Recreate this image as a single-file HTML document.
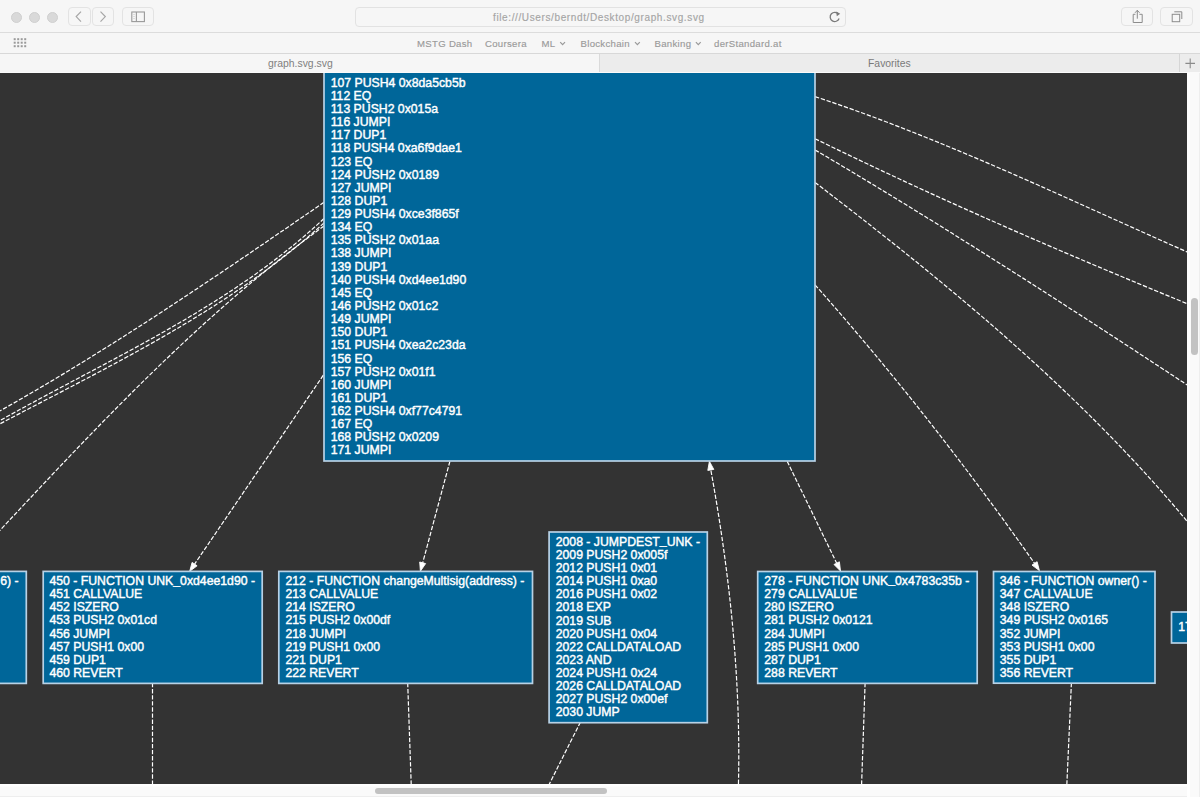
<!DOCTYPE html>
<html><head><meta charset="utf-8"><style>
*{margin:0;padding:0;box-sizing:border-box}
html,body{width:1200px;height:797px;overflow:hidden;background:#f6f6f6;font-family:"Liberation Sans",sans-serif}
.abs{position:absolute}
#toolbar{left:0;top:0;width:1200px;height:33px;background:#f6f6f6;border-bottom:1px solid #dcdcdc}
#bm{left:0;top:33px;width:1200px;height:21px;background:#f6f6f6;border-bottom:1px solid #d8d8d8}
#tabs{left:0;top:54px;width:1200px;height:19px;background:#ececec}
#content{left:0;top:73px;width:1187px;height:711px}
.circ{width:11px;height:11px;border-radius:50%;background:#d9d9d9;border:0.5px solid #cfcfcf}
.btn{border:1px solid #e3e3e3;border-radius:4px;background:#f6f6f6}
.bmt{font-size:9.6px;letter-spacing:0.3px;-webkit-text-stroke:0.15px #9a9a9a;color:#9a9a9a;top:37.7px;white-space:nowrap}
.chev{top:39px}
svg text{font-family:"Liberation Sans",sans-serif;font-size:12.25px;fill:#ffffff;stroke:#ffffff;stroke-width:0.42px}
.e{fill:none;stroke:#ffffff;stroke-width:1.2;stroke-dasharray:4.35,1.74}
.a{fill:#ffffff;stroke:#ffffff;stroke-width:0.9}
.n{fill:#006699;stroke:#b8d2e6;stroke-width:1.7}
</style></head><body>
<div id="toolbar" class="abs">
  <div class="abs circ" style="left:11.4px;top:11.7px"></div>
  <div class="abs circ" style="left:28.9px;top:11.7px"></div>
  <div class="abs circ" style="left:46.5px;top:11.7px"></div>
  <div class="abs btn" style="left:68px;top:7px;width:23px;height:19px"></div>
  <div class="abs btn" style="left:92px;top:7px;width:22px;height:19px"></div>
  <svg class="abs" style="left:68px;top:7px" width="46" height="19"><path d="M13,4.6 L8.2,9.6 L13,14.6" fill="none" stroke="#a6a6a6" stroke-width="1.2"/><path d="M32.5,4.6 L37.3,9.6 L32.5,14.6" fill="none" stroke="#a6a6a6" stroke-width="1.2"/></svg>
  <div class="abs btn" style="left:122px;top:7px;width:32px;height:19px"></div>
  <svg class="abs" style="left:122px;top:7px" width="32" height="19"><rect x="9.8" y="5" width="12.6" height="9.6" fill="none" stroke="#999" stroke-width="1.1"/><line x1="14.4" y1="5" x2="14.4" y2="14.6" stroke="#999" stroke-width="1.1"/><path d="M12,7 v1 M12,9 v1 M12,11 v1" stroke="#bbb" stroke-width="0.8"/></svg>
  <div class="abs" style="left:354.5px;top:7px;width:491px;height:19.5px;border:1px solid #e2e2e2;border-radius:4px;background:#f6f6f6"></div>
  <div class="abs" style="left:493px;top:11.1px;font-size:10px;letter-spacing:0.62px;-webkit-text-stroke:0.15px #a5a5a5;color:#a5a5a5;white-space:nowrap;line-height:14px">file:///Users/berndt/Desktop/graph.svg.svg</div>
  <svg class="abs" style="left:826px;top:9px" width="17" height="16"><path d="M12.5,5.2 A4.6,4.6 0 1 0 13.1,9.5" fill="none" stroke="#7a7a7a" stroke-width="1.3"/><path d="M10.2,2.5 L14.2,4.8 L10.8,7.3 Z" fill="#7a7a7a"/></svg>
  <div class="abs btn" style="left:1121px;top:7px;width:32px;height:19px"></div>
  <svg class="abs" style="left:1121px;top:7px" width="32" height="19"><path d="M14.4,7.3 L12.2,7.3 L12.2,15.5 L21.2,15.5 L21.2,7.3 L18.4,7.3" fill="none" stroke="#8c8c8c" stroke-width="1"/><path d="M16.3,3.2 L16.3,11.7" stroke="#8c8c8c" stroke-width="1"/><path d="M14,5.8 L16.3,3.3 L18.6,5.8" fill="none" stroke="#8c8c8c" stroke-width="1"/></svg>
  <div class="abs btn" style="left:1160px;top:7px;width:33px;height:19px"></div>
  <svg class="abs" style="left:1160px;top:7px" width="33" height="19"><rect x="12.2" y="7.3" width="7.5" height="7.4" fill="none" stroke="#8c8c8c" stroke-width="1"/><path d="M14.3,4.8 L21.8,4.8 L21.8,12" fill="none" stroke="#8c8c8c" stroke-width="1"/></svg>
</div>
<div id="bm" class="abs">
  <svg class="abs" style="left:12px;top:4px" width="16" height="12">
  <rect x="1.7" y="1.2" width="2" height="2" fill="#9a9a9a"/><rect x="1.7" y="4.7" width="2" height="2" fill="#9a9a9a"/><rect x="1.7" y="8.2" width="2" height="2" fill="#9a9a9a"/><rect x="5.2" y="1.2" width="2" height="2" fill="#9a9a9a"/><rect x="5.2" y="4.7" width="2" height="2" fill="#9a9a9a"/><rect x="5.2" y="8.2" width="2" height="2" fill="#9a9a9a"/><rect x="8.7" y="1.2" width="2" height="2" fill="#9a9a9a"/><rect x="8.7" y="4.7" width="2" height="2" fill="#9a9a9a"/><rect x="8.7" y="8.2" width="2" height="2" fill="#9a9a9a"/><rect x="12.2" y="1.2" width="2" height="2" fill="#9a9a9a"/><rect x="12.2" y="4.7" width="2" height="2" fill="#9a9a9a"/><rect x="12.2" y="8.2" width="2" height="2" fill="#9a9a9a"/>
  </svg>
</div>
<div class="abs bmt" style="left:417px">MSTG Dash</div>
<div class="abs bmt" style="left:485px">Coursera</div>
<div class="abs bmt" style="left:541.5px">ML</div>
<div class="abs bmt" style="left:580.5px">Blockchain</div>
<div class="abs bmt" style="left:654.5px">Banking</div>
<div class="abs bmt" style="left:714px">derStandard.at</div>
<svg class="abs" style="left:0;top:37px" width="1200" height="12">
 <path d="M560.2,5.2 L562.6,7.7 L565,5.2" fill="none" stroke="#9a9a9a" stroke-width="1.2"/>
 <path d="M635,5.2 L637.4,7.7 L639.8,5.2" fill="none" stroke="#9a9a9a" stroke-width="1.2"/>
 <path d="M695.9,5.2 L698.3,7.7 L700.7,5.2" fill="none" stroke="#9a9a9a" stroke-width="1.2"/>
</svg>
<div id="tabs" class="abs">
  <div class="abs" style="left:0;top:0;width:600px;height:19px;background:#f6f6f6;border-right:1px solid #dadada"></div>
  <div class="abs" style="left:268px;top:3.1px;font-size:10.4px;color:#808080;line-height:14px">graph.svg.svg</div>
  <div class="abs" style="left:868px;top:3.1px;font-size:10.4px;color:#7a7a7a;line-height:14px">Favorites</div>
  <div class="abs" style="left:1179px;top:0;width:1px;height:19px;background:#d6d6d6"></div>
  <div class="abs" style="left:0;top:18px;width:1200px;height:1px;background:#fafafa"></div>
  <svg class="abs" style="left:1180px;top:0" width="20" height="19"><path d="M10.2,4.6 V14.2 M5.4,9.4 H15" stroke="#8a8a8a" stroke-width="1.1"/></svg>
</div>
<div id="content" class="abs"><svg width="1187" height="711" viewBox="0 73 1187 711">
<rect x="0" y="73" width="1187" height="711" fill="#333333"/>
<g><path class="e" d="M324.0,202.3 C211.9,279.5 99.5,356.4 -20.0,422.0"/><path class="e" d="M324.0,218.5 C224.0,312.2 96.6,364.2 -20.0,432.0"/><path class="e" d="M324.0,222.9 C223.2,314.8 98.6,370.8 -20.0,434.5"/><path class="e" d="M324.0,226.0 C199.6,315.6 94.4,429.3 -10.0,541.0"/><path class="e" d="M815.0,96.6 C951.0,141.4 1079.1,204.9 1210.0,262.0"/><path class="e" d="M815.0,138.7 C944.3,202.1 1076.7,258.7 1210.0,313.0"/><path class="e" d="M815.0,149.9 C949.3,229.1 1079.9,314.2 1210.0,400.0"/><path class="e" d="M815.0,182.4 C953.6,288.5 1090.0,400.5 1200.0,537.0"/><path class="e" d="M152.5,683.0 L152.5,790.0"/><path class="e" d="M407.7,683.0 L411.4,790.0"/><path class="e" d="M580.5,722.0 C558.7,765.3 558.7,765.3 546.4,790.0"/><path class="e" d="M865.1,683.0 L861.4,790.0"/><path class="e" d="M1071.4,683.0 L1066.6,790.0"/><path class="e" d="M323.3,375.2 L194.6,564.1"/><path class="a" d="M189.7,571.3 L192.1,562.4 L197.1,565.8 Z"/><path class="e" d="M449.9,461.3 L422.7,562.8"/><path class="a" d="M420.4,571.2 L419.7,562.0 L425.6,563.6 Z"/><path class="e" d="M787.2,461.3 L836.7,563.2"/><path class="a" d="M840.5,571.0 L834.0,564.5 L839.4,561.8 Z"/><path class="e" d="M815.0,284.8 C893.5,373.2 966.6,466.7 1034.6,563.4"/><path class="a" d="M1039.4,570.6 L1032.0,565.1 L1037.1,561.7 Z"/><path class="e" d="M738.3,790.0 C741.3,682.7 730.1,575.4 710.8,469.9"/><path class="a" d="M709.4,461.3 L713.8,469.4 L707.8,470.4 Z"/></g>
<g><rect class="n" x="324" y="40" width="491.0" height="421.0"/><text x="330.7" y="86.80">107 PUSH4 0x8da5cb5b</text><text x="330.7" y="99.93">112 EQ</text><text x="330.7" y="113.06">113 PUSH2 0x015a</text><text x="330.7" y="126.19">116 JUMPI</text><text x="330.7" y="139.32">117 DUP1</text><text x="330.7" y="152.45">118 PUSH4 0xa6f9dae1</text><text x="330.7" y="165.58">123 EQ</text><text x="330.7" y="178.71">124 PUSH2 0x0189</text><text x="330.7" y="191.84">127 JUMPI</text><text x="330.7" y="204.97">128 DUP1</text><text x="330.7" y="218.10">129 PUSH4 0xce3f865f</text><text x="330.7" y="231.23">134 EQ</text><text x="330.7" y="244.36">135 PUSH2 0x01aa</text><text x="330.7" y="257.49">138 JUMPI</text><text x="330.7" y="270.62">139 DUP1</text><text x="330.7" y="283.75">140 PUSH4 0xd4ee1d90</text><text x="330.7" y="296.88">145 EQ</text><text x="330.7" y="310.01">146 PUSH2 0x01c2</text><text x="330.7" y="323.14">149 JUMPI</text><text x="330.7" y="336.27">150 DUP1</text><text x="330.7" y="349.40">151 PUSH4 0xea2c23da</text><text x="330.7" y="362.53">156 EQ</text><text x="330.7" y="375.66">157 PUSH2 0x01f1</text><text x="330.7" y="388.79">160 JUMPI</text><text x="330.7" y="401.92">161 DUP1</text><text x="330.7" y="415.05">162 PUSH4 0xf77c4791</text><text x="330.7" y="428.18">167 EQ</text><text x="330.7" y="441.31">168 PUSH2 0x0209</text><text x="330.7" y="454.44">171 JUMPI</text><rect class="n" x="-200" y="571.4" width="226.3" height="112.0"/><text x="0.3" y="585.1">6) -</text><rect class="n" x="43.2" y="571.4" width="219.0" height="112.0"/><text x="49.4" y="585.10">450 - FUNCTION UNK<tspan dy="-1.6">_</tspan><tspan dy="1.6">0xd4ee1d90 -</tspan></text><text x="49.4" y="598.23">451 CALLVALUE</text><text x="49.4" y="611.36">452 ISZERO</text><text x="49.4" y="624.49">453 PUSH2 0x01cd</text><text x="49.4" y="637.62">456 JUMPI</text><text x="49.4" y="650.75">457 PUSH1 0x00</text><text x="49.4" y="663.88">459 DUP1</text><text x="49.4" y="677.01">460 REVERT</text><rect class="n" x="278.8" y="571.4" width="253.7" height="112.0"/><text x="285.4" y="585.10">212 - FUNCTION changeMultisig(address) -</text><text x="285.4" y="598.23">213 CALLVALUE</text><text x="285.4" y="611.36">214 ISZERO</text><text x="285.4" y="624.49">215 PUSH2 0x00df</text><text x="285.4" y="637.62">218 JUMPI</text><text x="285.4" y="650.75">219 PUSH1 0x00</text><text x="285.4" y="663.88">221 DUP1</text><text x="285.4" y="677.01">222 REVERT</text><rect class="n" x="549.1" y="532" width="158.2" height="190.7"/><text x="555.7" y="545.80">2008 - JUMPDEST<tspan dy="-1.6">_</tspan><tspan dy="1.6">UNK -</tspan></text><text x="555.7" y="558.93">2009 PUSH2 0x005f</text><text x="555.7" y="572.06">2012 PUSH1 0x01</text><text x="555.7" y="585.19">2014 PUSH1 0xa0</text><text x="555.7" y="598.32">2016 PUSH1 0x02</text><text x="555.7" y="611.45">2018 EXP</text><text x="555.7" y="624.58">2019 SUB</text><text x="555.7" y="637.71">2020 PUSH1 0x04</text><text x="555.7" y="650.84">2022 CALLDATALOAD</text><text x="555.7" y="663.97">2023 AND</text><text x="555.7" y="677.10">2024 PUSH1 0x24</text><text x="555.7" y="690.23">2026 CALLDATALOAD</text><text x="555.7" y="703.36">2027 PUSH2 0x00ef</text><text x="555.7" y="716.49">2030 JUMP</text><rect class="n" x="757.7" y="571.5" width="219.5" height="111.9"/><text x="764.3" y="585.00">278 - FUNCTION UNK<tspan dy="-1.6">_</tspan><tspan dy="1.6">0x4783c35b -</tspan></text><text x="764.3" y="598.13">279 CALLVALUE</text><text x="764.3" y="611.26">280 ISZERO</text><text x="764.3" y="624.39">281 PUSH2 0x0121</text><text x="764.3" y="637.52">284 JUMPI</text><text x="764.3" y="650.65">285 PUSH1 0x00</text><text x="764.3" y="663.78">287 DUP1</text><text x="764.3" y="676.91">288 REVERT</text><rect class="n" x="993.5" y="571.5" width="161.5" height="111.7"/><text x="999.8" y="585.00">346 - FUNCTION owner() -</text><text x="999.8" y="598.13">347 CALLVALUE</text><text x="999.8" y="611.26">348 ISZERO</text><text x="999.8" y="624.39">349 PUSH2 0x0165</text><text x="999.8" y="637.52">352 JUMPI</text><text x="999.8" y="650.65">353 PUSH1 0x00</text><text x="999.8" y="663.78">355 DUP1</text><text x="999.8" y="676.91">356 REVERT</text><rect class="n" x="1171.5" y="612" width="88.5" height="31.0"/><text x="1178.2" y="630.8">17</text></g>
</svg></div>
<div class="abs" style="left:1187px;top:73px;width:13px;height:724px;background:linear-gradient(90deg,#fff 0,#fff 2.5px,#fafafa 3.5px,#fafafa 12px,#eeeeee 12px)"></div>
<div class="abs" style="left:0;top:784px;width:1187px;height:13px;background:linear-gradient(180deg,#fff 0,#fff 2px,#fafafa 3px,#fafafa 12px,#eeeeee 12px)"></div>
<div class="abs" style="left:1191px;top:298px;width:6.8px;height:57px;border-radius:4px;background:#c2c2c2"></div>
<div class="abs" style="left:375px;top:787.8px;width:231.5px;height:6.5px;border-radius:4px;background:#c2c2c2"></div>
</body></html>
